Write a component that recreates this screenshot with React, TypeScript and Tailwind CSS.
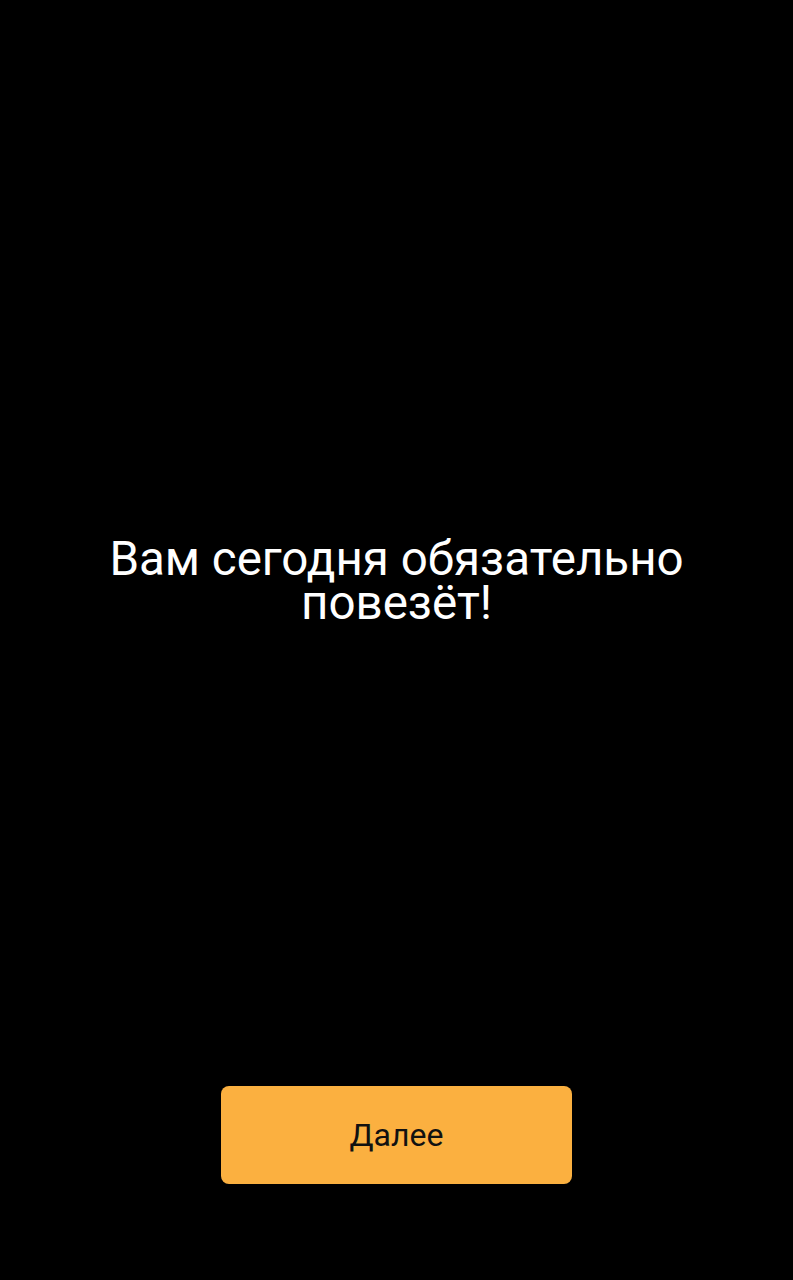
export default function App() {
  return (
    <div className="flex h-[1280px] w-full flex-col items-center bg-black font-['Roboto',sans-serif]">
      {/* Сообщение */}
      <div className="flex flex-1 items-center justify-center px-6 pt-[75px]">
        <p className="text-center text-[47.5px] leading-[44px] text-white">
          Вам сегодня обязательно
          <br />
          повезёт!
        </p>
      </div>

      {/* Кнопка */}
      <div className="pb-[96px]">
        <button className="flex h-[98px] w-[351px] items-center justify-center rounded-lg bg-[#fbb040] text-[32px] text-[#111]">
          Далее
        </button>
      </div>
    </div>
  );
}
